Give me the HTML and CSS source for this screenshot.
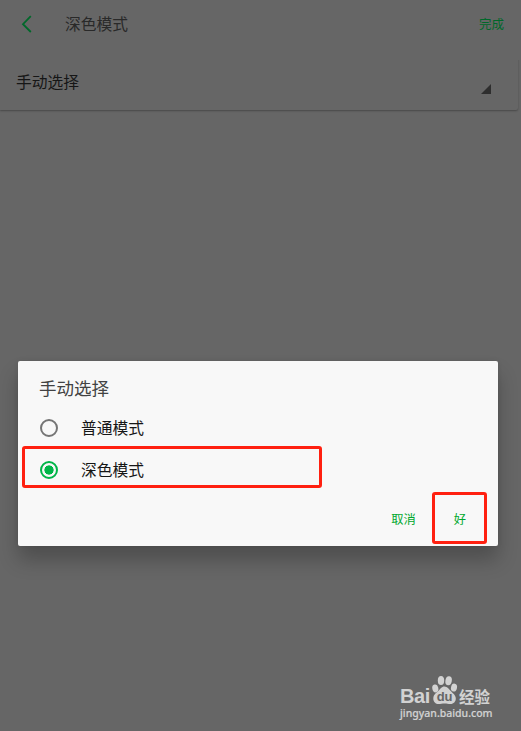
FILE: index.html
```
<!DOCTYPE html>
<html lang="zh-CN">
<head>
    <meta charset="UTF-8">
    <meta name="viewport" content="width=device-width, initial-scale=1.0">
    <title>深色模式</title>
    <link rel="stylesheet" href="styles.css">
</head>
<body>
    <header class="topbar">
        <svg class="back" width="12" height="18" viewBox="0 0 12 18">
            <path d="M9.8 1.2 2 9.2l7.8 7.8" fill="none" stroke="#00682a" stroke-width="1.8"/>
        </svg>
        <h1>深色模式</h1>
        <span class="done">完成</span>
    </header>
    <div class="setting">
        <span class="label">手动选择</span>
        <span class="corner"></span>
    </div>

    <div class="dialog">
        <h2>手动选择</h2>
        <div class="option">
            <span class="radio"></span>
            <span class="label">普通模式</span>
        </div>
        <div class="option">
            <span class="radio checked"></span>
            <span class="label">深色模式</span>
        </div>
        <div class="actions">
            <span>取消</span>
            <span>好</span>
        </div>
        <div class="mark mark-option"></div>
        <div class="mark mark-ok"></div>
    </div>

    <div class="watermark">
        <div class="brand">
            <span class="bai">Bai</span>
            <svg class="paw" width="27" height="30" viewBox="0 0 27 30">
                <g fill="#d2d2d2">
                    <ellipse cx="4.3" cy="13.4" rx="3" ry="4" transform="rotate(-12 4.3 13.4)"/>
                    <ellipse cx="10" cy="5.6" rx="3.2" ry="4.5"/>
                    <ellipse cx="17.6" cy="5.8" rx="3.2" ry="4.5" transform="rotate(10 17.6 5.8)"/>
                    <ellipse cx="23" cy="12.6" rx="3" ry="4" transform="rotate(12 23 12.6)"/>
                    <path d="M13.5 11.4c-3 0-4.2 2.4-6.2 4.6-2.4 2.2-5 3.8-5 7.5 0 3.2 2.4 5.6 5.2 5.6 2.1 0 3.7-.5 6-.5s3.7.5 6 .5c3.1 0 5.3-2.4 5.3-5.5 0-3.6-3-5.3-5-7.6-2.1-2.3-3.3-4.6-6.3-4.6z"/>
                </g>
                <text x="13.6" y="26" text-anchor="middle" class="du">du</text>
            </svg>
            <span class="jingyan">经验</span>
        </div>
        <div class="site">jingyan.baidu.com</div>
    </div>
</body>
</html>
```
FILE: styles.css
```
* {
    box-sizing: border-box;
}
body {
    margin: 0;
    height: 731px;
    overflow: hidden;
    position: relative;
    background-color: #666;
    font-family: "Noto Sans CJK SC", sans-serif;
    font-size: 15.75px;
    color: #161616;
}
h1, h2 {
    margin: 0;
    font-weight: 400;
}
.label {
    padding-bottom: 2px;
}
.topbar {
    display: flex;
    align-items: center;
    height: 48px;
    padding: 0 17px 0 21px;
}
.topbar h1 {
    flex: 1;
    margin-left: 32px;
    padding-bottom: 2px;
    font-size: 15.75px;
    color: #292929;
}
.done {
    padding-bottom: 2px;
    font-size: 12.5px;
    color: #00682a;
}
.setting {
    display: flex;
    align-items: center;
    justify-content: space-between;
    height: 62px;
    margin-right: 3px;
    padding: 6px 27px 0 16px;
    border-radius: 0 0 2px 0;
    box-shadow: 0 1px 2px rgba(0, 0, 0, .3);
    clip-path: inset(12px -4px -4px 0);
}
.corner {
    width: 10px;
    height: 10px;
    margin-top: 14px;
    background-color: #2e2e2e;
    clip-path: polygon(100% 0, 100% 100%, 0 100%);
}
.dialog {
    position: absolute;
    left: 18px;
    top: 361px;
    width: 480px;
    height: 185px;
    padding-top: 8px;
    background-color: #f8f8f8;
    border-radius: 2px;
    box-shadow: 0 14px 20px rgba(0, 0, 0, .24), 0 0 5px rgba(0, 0, 0, .08);
}
.dialog h2 {
    height: 38px;
    padding-left: 21px;
    font-size: 17.5px;
    line-height: 37px;
    color: #424242;
}
.option {
    display: flex;
    align-items: center;
    height: 42px;
    padding-left: 22px;
}
.radio {
    width: 18px;
    height: 18px;
    margin-right: 23px;
    border: 2px solid #757575;
    border-radius: 50%;
}
.radio.checked {
    border-color: #00b548;
    background: radial-gradient(circle, #00b548 4.3px, transparent 4.9px);
}
.actions {
    display: flex;
    justify-content: flex-end;
    gap: 38px;
    padding: 18px 32px 0 0;
    font-size: 12.25px;
    line-height: 20px;
    color: #00a82d;
}
.mark {
    position: absolute;
    border: 3px solid #ff2010;
    border-radius: 3px;
}
.mark-option {
    left: 4px;
    top: 85px;
    width: 300px;
    height: 42px;
}
.mark-ok {
    left: 414px;
    top: 131px;
    width: 55px;
    height: 52px;
}
.watermark {
    position: absolute;
    left: 400px;
    top: 674px;
    width: 96px;
    color: #d2d2d2;
}
.brand {
    display: flex;
    align-items: flex-end;
    height: 31px;
}
.bai {
    width: 31px;
    font: bold 20px/18px "Liberation Sans", sans-serif;
    letter-spacing: -.4px;
}
.paw {
    flex: none;
}
.du {
    font: bold 13px "Liberation Sans", sans-serif;
    fill: #666;
}
.jingyan {
    margin-left: 1px;
    font-size: 15.5px;
    font-weight: 700;
    line-height: 18px;
    white-space: nowrap;
}
.site {
    margin-top: 1px;
    font: 500 10.5px/15px "Noto Sans", sans-serif;
    -webkit-text-stroke: .2px #d2d2d2;
}
```
